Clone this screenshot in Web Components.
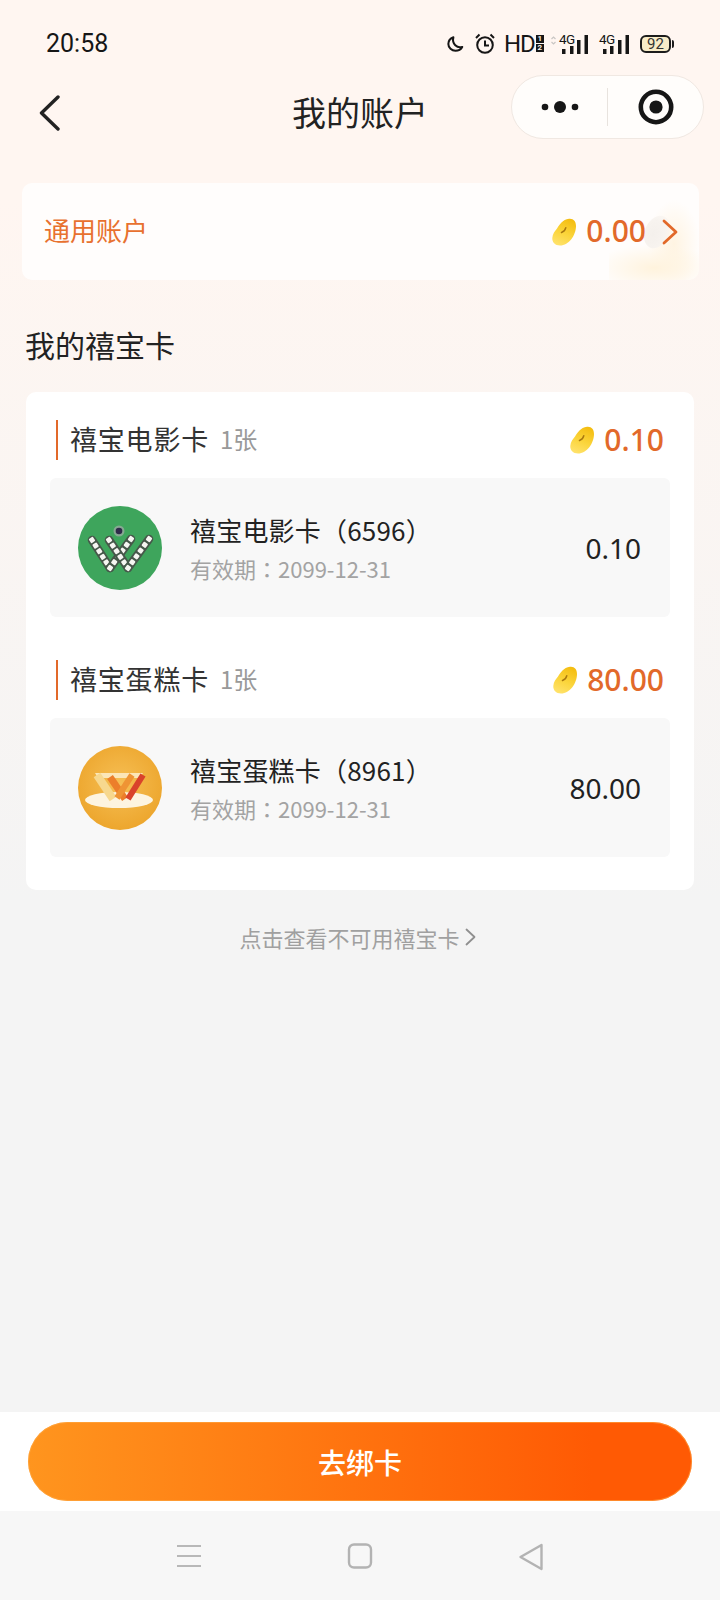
<!DOCTYPE html>
<html lang="zh">
<head>
<meta charset="utf-8">
<title>我的账户</title>
<style>
	html, body { margin: 0; padding: 0; }
	body { width: 720px; height: 1600px; overflow: hidden; font-family: "Noto Sans CJK SC", "Noto Sans", sans-serif; color: #222; }
</style>
</head>
<body>
<account-page>
	<status-bar slot="top"></status-bar>
	<nav-header slot="top" title="我的账户"></nav-header>
	<general-account slot="main" label="通用账户" amount="0.00"></general-account>
	<h-title slot="main">我的禧宝卡</h-title>
	<card-list slot="main">
		<card-group name="禧宝电影卡" count="1张" amount="0.10">
			<card-row name="禧宝电影卡（6596）" expiry="有效期：2099-12-31" value="0.10" logo="green"></card-row>
		</card-group>
		<card-group name="禧宝蛋糕卡" count="1张" amount="80.00">
			<card-row name="禧宝蛋糕卡（8961）" expiry="有效期：2099-12-31" value="80.00" logo="gold"></card-row>
		</card-group>
	</card-list>
	<more-link slot="main">点击查看不可用禧宝卡</more-link>
	<bind-bar slot="bottom">去绑卡</bind-bar>
	<system-nav slot="bottom"></system-nav>
</account-page>

<script>
const BEAN = `
	<svg viewBox="0 0 24 28" width="24" height="28" aria-hidden="true">
		<defs>
			<linearGradient id="bean" x1="0.7" y1="0" x2="0.3" y2="1">
				<stop offset="0" stop-color="#f4bd10"/>
				<stop offset="0.55" stop-color="#fbd53c"/>
				<stop offset="1" stop-color="#ffe26a"/>
			</linearGradient>
		</defs>
		<path d="M17 .8C21.500 .3 24 3.500 24 8 24 17 17 27.500 8 27.500 3 27.500 0 24 .3 20 .6 15.500 3 13 5 10.500 7.500 7 10.500 1.500 17 .8z" fill="url(#bean)"/>
		<path d="M9.500 14.500c2.500-.8 3.800-2.300 4.300-4.800" fill="none" stroke="#a9780f" stroke-width="1.500" stroke-linecap="round"/>
	</svg>`;

class StatusBar extends HTMLElement {
	connectedCallback() {
		this.attachShadow( { mode: 'open' } ).innerHTML = `
			<style>
				:host { display: flex; align-items: center; justify-content: space-between; height: 75px; padding: 12px 47px 0 46px; box-sizing: border-box; color: #161616; }
				.time { font: 25px/1 Roboto, "Noto Sans", sans-serif; }
				.icons { display: flex; align-items: center; gap: 11px; }
				.hd { font: 400 24px/1 Roboto, sans-serif; letter-spacing: -1px; display: flex; align-items: center; width: 35px; margin-left: -2px; }
				.sim { display: flex; flex-direction: column; gap: 1px; margin-left: 1px; }
				.sim b { display: block; width: 8px; height: 8px; background: #161616; color: #fff7f2; font: 700 8px/8px Roboto, sans-serif; text-align: center; letter-spacing: 0; }
				.sig { position: relative; height: 20px; }
				.sig span { position: absolute; top: 0; font: 400 13.500px/11px Roboto, sans-serif; letter-spacing: -0.5px; }
				.sig svg { position: absolute; left: 0; top: 0; }
				.battery { position: relative; width: 31px; height: 18px; border: 2px solid #1c1c1c; border-radius: 6px; box-sizing: border-box; background: #f8ecc8; font: 15px/14px Roboto, sans-serif; text-align: center; margin-right: 2px; color: #333; }
				.battery::after { content: ""; position: absolute; right: -5px; top: 3px; width: 2px; height: 8px; background: #1c1c1c; border-radius: 0 2px 2px 0; }
			</style>
			<span class="time">20:58</span>
			<div class="icons">
				<svg width="17" height="16" viewBox="0 0 20 19"><path d="M7.500 1.500C3.500 3 1.500 6 1.500 9.500 1.500 14 5.500 17.500 10 17.500c3.500 0 6.500-1.800 8-4.500-6 2-12.500-3.500-10.500-11.500z" fill="none" stroke="#161616" stroke-width="2.400" stroke-linejoin="round"/></svg>
				<svg width="20" height="21" viewBox="0 0 20 21"><circle cx="10" cy="12" r="7.800" fill="none" stroke="#161616" stroke-width="2"/><path d="M10 7.500v5h4M1 5l3.500-3.500M19 5l-3.500-3.500" fill="none" stroke="#161616" stroke-width="2"/></svg>
				<span class="hd">HD<span class="sim"><b>1</b><b>2</b></span></span>
				<div class="sig" style="width:38px">
					<svg width="38" height="20"><path d="M1.500 5l2-2 2 2M1.500 8l2 2 2-2" fill="none" stroke="#c9c6c4" stroke-width="1.200"/><path d="M12 15h3.500v5H12zM20 12h3.500v8H20zM27 6h3.500v14H27zM34.500 1H38v19h-3.500z" fill="#161616"/></svg>
					<span style="left:9px">4G</span>
				</div>
				<div class="sig" style="width:30px">
					<svg width="30" height="20"><path d="M4 15h3.500v5H4zM11 12h3.500v8H11zM19 6h3.500v14H19zM26.500 1H30v19h-3.500z" fill="#161616"/></svg>
					<span style="left:0">4G</span>
				</div>
				<div class="battery">92</div>
			</div>
		`;
	}
}

class NavHeader extends HTMLElement {
	connectedCallback() {
		this.attachShadow( { mode: 'open' } ).innerHTML = `
			<style>
				:host { display: grid; grid-template-columns: 1fr auto 1fr; align-items: center; height: 64px; padding: 0 16px; box-sizing: border-box; color: #222; }
				.title { font-size: 34px; line-height: 1; text-align: center; padding-top: 10px; }
				.back { display: block; margin: 12px 0 0 22px; }
				.capsule { justify-self: end; width: 193px; height: 64px; box-sizing: border-box; border: 1px solid #f0e8e2; border-radius: 32px; background: #fffdfb; display: grid; grid-template-columns: 1fr 1px 1fr; align-items: center; justify-items: center; }
				.sep { width: 1px; height: 38px; background: #e8e3de; }
			</style>
			<svg class="back" width="24" height="36" viewBox="0 0 24 36"><path d="M20 2 3.500 18 20 34" fill="none" stroke="#222" stroke-width="3.400" stroke-linecap="round" stroke-linejoin="round"/></svg>
			<div class="title">${ this.getAttribute( 'title' ) }</div>
			<div class="capsule">
				<svg width="38" height="14" viewBox="0 0 38 14"><circle cx="4" cy="7" r="3.300" fill="#161616"/><circle cx="19" cy="7" r="6" fill="#161616"/><circle cx="34" cy="7" r="3.300" fill="#161616"/></svg>
				<span class="sep"></span>
				<svg width="36" height="36" viewBox="0 0 36 36"><circle cx="18" cy="18" r="15.200" fill="none" stroke="#161616" stroke-width="4.600"/><circle cx="18" cy="18" r="6.600" fill="#161616"/></svg>
			</div>
		`;
	}
}

class GeneralAccount extends HTMLElement {
	connectedCallback() {
		this.attachShadow( { mode: 'open' } ).innerHTML = `
			<style>
				:host { display: flex; align-items: center; position: relative; overflow: hidden; height: 97px; margin: 44px 21px 0 22px; padding: 0 21px 0 22px; box-sizing: border-box; border-radius: 10px; background: #fffdfc; }
				.label { flex: 1; font-size: 26px; color: #e8712f; padding-bottom: 4px; }
				.amount { font: 500 30px/1 "Noto Sans", sans-serif; color: #e2692a; margin-left: 10px; padding-bottom: 2px; position: relative; }
				svg { position: relative; }
				.chev { margin-left: 16px; }
				.glow { position: absolute; right: 0; bottom: 0; width: 90px; height: 80px; background: radial-gradient(ellipse 60px 24px at 50% 85%, #fff3dd 0, rgba(255,246,230,0) 100%), radial-gradient(ellipse 26px 44px at 72% 55%, #fff4e2 0, rgba(255,248,236,0) 100%); }
				.shade { position: absolute; right: 30px; top: 32px; width: 24px; height: 34px; border-radius: 50%; background: radial-gradient(ellipse at 40% 60%, #f4f0ec 0, #f7f3ef 50%, rgba(250,246,240,0) 100%); transform: rotate(25deg); }
			</style>
			<div class="glow"></div><div class="shade"></div>
			<span class="label">${ this.getAttribute( 'label' ) }</span>
			${ BEAN }
			<span class="amount">${ this.getAttribute( 'amount' ) }</span>
			<svg class="chev" width="16" height="26" viewBox="0 0 16 26"><path d="M2 2l12 11L2 24" fill="none" stroke="#e2692a" stroke-width="2.800" stroke-linecap="round" stroke-linejoin="round"/></svg>
		`;
	}
}

class HTitle extends HTMLElement {
	connectedCallback() {
		this.attachShadow( { mode: 'open' } ).innerHTML = `
			<style>
				:host { display: block; margin: 43px 0 0 25px; font-size: 30px; line-height: 42px; color: #222; }
			</style>
			<slot></slot>
		`;
	}
}

class CardList extends HTMLElement {
	connectedCallback() {
		this.attachShadow( { mode: 'open' } ).innerHTML = `
			<style>
				:host { display: flex; flex-direction: column; gap: 43px; margin: 27px 26px 0; padding: 28px 24px 33px; border-radius: 10px; background: #fff; }
			</style>
			<slot></slot>
		`;
	}
}

class CardGroup extends HTMLElement {
	connectedCallback() {
		this.attachShadow( { mode: 'open' } ).innerHTML = `
			<style>
				:host { display: block; }
				.head { display: flex; align-items: center; height: 40px; margin: 0 6px 18px 6px; border-left: 2px solid #e2692a; padding-left: 12px; }
				.name { font-size: 27px; letter-spacing: 0.8px; color: #333; padding-bottom: 4px; }
				.count { font-size: 24px; color: #999; margin-left: 11px; flex: 1; padding-bottom: 4px; }
				.amount { font: 500 30px/1 "Noto Sans", sans-serif; color: #e2692a; margin-left: 10px; }
			</style>
			<div class="head">
				<span class="name">${ this.getAttribute( 'name' ) }</span>
				<span class="count">${ this.getAttribute( 'count' ) }</span>
				${ BEAN }
				<span class="amount">${ this.getAttribute( 'amount' ) }</span>
			</div>
			<slot></slot>
		`;
	}
}

class CardRow extends HTMLElement {
	connectedCallback() {
		const logo = this.getAttribute( 'logo' ) === 'green' ? this.greenLogo() : this.goldLogo();
		this.attachShadow( { mode: 'open' } ).innerHTML = `
			<style>
				:host { display: flex; align-items: center; height: 139px; padding: 0 29px 0 28px; box-sizing: border-box; border-radius: 6px; background: #f8f8f8; }
				.info { flex: 1; margin-left: 28px; display: flex; flex-direction: column; gap: 3px; }
				.name { font-family: "Noto Sans CJK TC", sans-serif; font-size: 26px; line-height: 38px; letter-spacing: 0.2px; color: #222; white-space: nowrap; }
				.expiry { font-family: "Noto Sans CJK TC", sans-serif; font-size: 22px; line-height: 32px; color: #a3a3a3; white-space: nowrap; }
				.value { font: 28px/1 "Noto Sans", sans-serif; color: #222; }
				svg { flex: none; }
			</style>
			${ logo }
			<div class="info">
				<span class="name">${ this.getAttribute( 'name' ) }</span>
				<span class="expiry" lang="zh-TW">${ this.getAttribute( 'expiry' ) }</span>
			</div>
			<span class="value">${ this.getAttribute( 'value' ) }</span>
		`;
	}
	greenLogo() {
		const arm = ( x1, y1, x2, y2, n ) => {
			const deg = Math.atan2( y2 - y1, x2 - x1 ) * 180 / Math.PI;
			let out = `<path d="M${ x1 } ${ y1 }L${ x2 } ${ y2 }" stroke="#46584a" stroke-width="8.500" stroke-linecap="round"/>`;
			for ( let i = 0; i <= n; i++ ) {
				const x = x1 + ( x2 - x1 ) * i / n;
				const y = y1 + ( y2 - y1 ) * i / n;
				out += `<rect x="${ x - 2.500 }" y="${ y - 2.500 }" width="5" height="5" rx="1" fill="#f6f6f2" transform="rotate(${ deg } ${ x } ${ y })"/>`;
			}
			return out;
		};
		return `
			<svg width="84" height="84" viewBox="0 0 84 84">
				<circle cx="42" cy="42" r="42" fill="#3ea55c"/>
				${ arm( 14, 34, 32, 62, 5 ) }
				${ arm( 32, 62, 53, 33, 5 ) }
				${ arm( 31, 34, 50, 62, 5 ) }
				${ arm( 50, 62, 71, 33, 5 ) }
				<circle cx="41" cy="25" r="5.500" fill="#86a892"/>
				<circle cx="41" cy="25" r="3.300" fill="#2f2b4a"/>
			</svg>`;
	}
	goldLogo() {
		return `
			<svg width="84" height="84" viewBox="0 0 84 84">
				<defs>
					<radialGradient id="gold" cx="0.5" cy="0.45" r="0.6">
						<stop offset="0" stop-color="#f6bf55"/>
						<stop offset="1" stop-color="#eca42a"/>
					</radialGradient>
				</defs>
				<circle cx="42" cy="42" r="42" fill="url(#gold)"/>
				<ellipse cx="41" cy="54" rx="34" ry="8" fill="#fdf4e0"/>
				<path d="M17 27h48l-3 5H20z" fill="#fbe6b8"/>
				<path d="M19 29l16 24" stroke="#f7d88e" stroke-width="8"/>
				<path d="M32 31l15 22" stroke="#ec7e2a" stroke-width="7"/>
				<path d="M39 52l15-23" stroke="#ef9434" stroke-width="6"/>
				<path d="M50 53l15-24" stroke="#d9432b" stroke-width="6"/>
			</svg>`;
	}
}

class MoreLink extends HTMLElement {
	connectedCallback() {
		this.attachShadow( { mode: 'open' } ).innerHTML = `
			<style>
				:host { display: flex; justify-content: center; align-items: center; gap: 5px; margin-top: 30px; padding-right: 5px; font-size: 22px; line-height: 34px; color: #a0a0a0; }
			</style>
			<slot></slot>
			<svg width="11" height="18" viewBox="0 0 11 18"><path d="M1.500 1.500 9.500 9l-8 7.500" fill="none" stroke="#8f8f8f" stroke-width="1.800" stroke-linecap="round" stroke-linejoin="round"/></svg>
		`;
	}
}

class BindBar extends HTMLElement {
	connectedCallback() {
		this.attachShadow( { mode: 'open' } ).innerHTML = `
			<style>
				:host { display: block; padding: 10px 28px; background: #fff; }
				button { display: block; width: 100%; height: 79px; border: 0; border-radius: 40px; padding: 0; background: linear-gradient( 90deg, #ff951e 0%, #ff5a04 85%, #ff5a04 100% ); color: #fff; font: 500 28px/1 "Noto Sans CJK SC", sans-serif; box-shadow: inset 0 0 0 1px rgba(255,170,70,.6); }
			</style>
			<button type="button"><slot></slot></button>
		`;
	}
}

class SystemNav extends HTMLElement {
	connectedCallback() {
		this.attachShadow( { mode: 'open' } ).innerHTML = `
			<style>
				:host { display: flex; justify-content: center; align-items: flex-start; gap: 145px; height: 89px; padding-top: 32px; box-sizing: border-box; background: #f7f7f7; }
			</style>
			<svg width="26" height="26" viewBox="0 0 26 26"><path d="M1 3h24M1 13h24M1 23h24" stroke="#b8b8b8" stroke-width="2.200"/></svg>
			<svg width="26" height="26" viewBox="0 0 26 26"><rect x="2" y="1.500" width="22" height="23" rx="5" fill="none" stroke="#b3b3b3" stroke-width="2.400"/></svg>
			<svg width="26" height="28" viewBox="0 0 26 28"><path d="M23.500 2 2.500 14l21 12z" fill="none" stroke="#b3b3b3" stroke-width="2.400" stroke-linejoin="round"/></svg>
		`;
	}
}

class AccountPage extends HTMLElement {
	connectedCallback() {
		this.attachShadow( { mode: 'open' } ).innerHTML = `
			<style>
				:host { display: flex; flex-direction: column; height: 1600px; background: linear-gradient( 180deg, #fff6f1 0%, #fff6f1 200px, #f4f4f4 900px, #f4f4f4 100% ); }
				.main { flex: 1; display: flex; flex-direction: column; }
			</style>
			<slot name="top"></slot>
			<div class="main"><slot name="main"></slot></div>
			<slot name="bottom"></slot>
		`;
	}
}

customElements.define( 'status-bar', StatusBar );
customElements.define( 'nav-header', NavHeader );
customElements.define( 'general-account', GeneralAccount );
customElements.define( 'h-title', HTitle );
customElements.define( 'card-list', CardList );
customElements.define( 'card-group', CardGroup );
customElements.define( 'card-row', CardRow );
customElements.define( 'more-link', MoreLink );
customElements.define( 'bind-bar', BindBar );
customElements.define( 'system-nav', SystemNav );
customElements.define( 'account-page', AccountPage );
</script>
</body>
</html>
